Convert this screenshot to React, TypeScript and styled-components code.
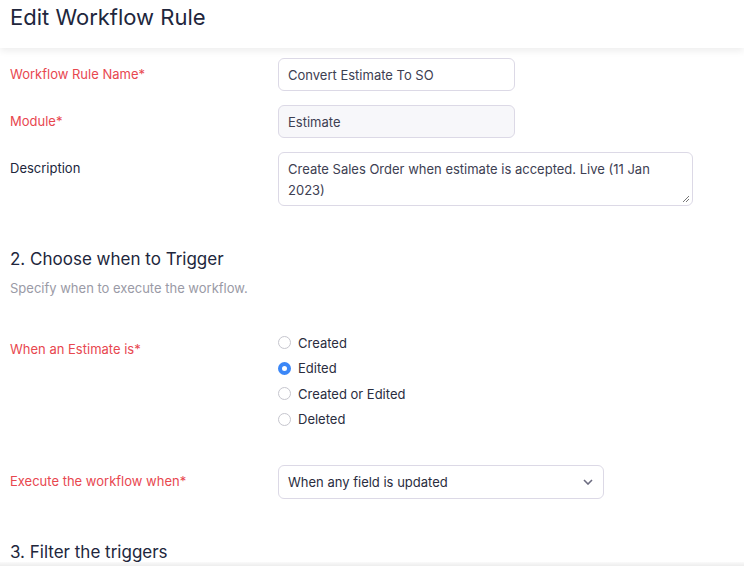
import styled, { createGlobalStyle } from "styled-components";

const GlobalStyle = createGlobalStyle`
  html, body {
    margin: 0;
    padding: 0;
    background: #fff;
    font-family: Inter, "Noto Sans", sans-serif;
    color: #21263c;
  }
  * {
    box-sizing: border-box;
  }
`;

const Page = styled.div`
  width: 744px;
  height: 566px;
  overflow: hidden;
  position: relative;
`;

const Header = styled.header`
  height: 48px;
  padding: 3px 10px 0;
  background: #fff;
  box-shadow: 0 3px 7px rgba(0, 0, 0, 0.07);
  position: relative;
  z-index: 1;
`;

const Title = styled.h1`
  margin: 0;
  font-size: 22px;
  line-height: 28px;
  font-weight: 400;
  color: #21263c;
`;

const Body = styled.main`
  padding: 10px 10px 0;
`;

const Row = styled.div<{ $top?: number }>`
  display: grid;
  grid-template-columns: 268px 1fr;
  margin-top: ${(p) => p.$top ?? 14}px;
`;

const Label = styled.label<{ $required?: boolean; $offset?: number }>`
  font-size: 13px;
  line-height: 33px;
  padding-top: ${(p) => p.$offset ?? 0}px;
  color: ${(p) => (p.$required ? "#e8474f" : "#21263c")};
`;

const TextInput = styled.div<{ $disabled?: boolean }>`
  width: 237px;
  height: 33px;
  display: flex;
  align-items: center;
  padding: 0 9px;
  font-size: 13px;
  color: #3d4052;
  border: 1px solid #dcd9e6;
  border-radius: 6px;
  background: ${(p) => (p.$disabled ? "#f7f7fa" : "#fff")};
`;

const TextArea = styled.div`
  position: relative;
  width: 415px;
  height: 54px;
  padding: 6px 9px;
  font-size: 13px;
  line-height: 21px;
  color: #3d4052;
  border: 1px solid #dcd9e6;
  border-radius: 6px;
`;

const Grip = styled.svg`
  position: absolute;
  right: 2px;
  bottom: 2px;
`;

const SectionTitle = styled.h2<{ $top?: number }>`
  margin: ${(p) => p.$top ?? 41}px 0 0;
  font-size: 17px;
  line-height: 24px;
  font-weight: 400;
  color: #21263c;
`;

const SectionHint = styled.p`
  margin: 8px 0 0;
  font-size: 13px;
  line-height: 18px;
  color: #9a9aa6;
`;

const RadioGroup = styled.div`
  display: flex;
  flex-direction: column;
`;

const RadioItem = styled.div`
  display: flex;
  align-items: center;
  gap: 7px;
  height: 25.5px;
  font-size: 13px;
  color: #2a2d3e;
`;

const RadioDot = styled.span<{ $checked?: boolean }>`
  width: 13px;
  height: 13px;
  border-radius: 50%;
  flex: none;
  border: ${(p) => (p.$checked ? "4px solid #3b87f7" : "1px solid #c6c6ce")};
  background: #fff;
`;

const Select = styled.div`
  width: 326px;
  height: 34px;
  display: flex;
  align-items: center;
  justify-content: space-between;
  padding: 0 10px 0 9px;
  font-size: 13px;
  color: #2a2d3e;
  border: 1px solid #dcd9e6;
  border-radius: 6px;
  background: #fff;
`;

const FooterShade = styled.div`
  position: absolute;
  left: 0;
  right: 0;
  bottom: 0;
  height: 4px;
  background: linear-gradient(to bottom, rgba(0, 0, 0, 0.02), rgba(0, 0, 0, 0.07));
`;

const triggers = ["Created", "Edited", "Created or Edited", "Deleted"];

export default function App() {
  return (
    <Page>
      <GlobalStyle />
      <Header>
        <Title>Edit Workflow Rule</Title>
      </Header>
      <Body>
        <Row $top={0}>
          <Label $required>Workflow Rule Name*</Label>
          <TextInput>Convert Estimate To SO</TextInput>
        </Row>
        <Row>
          <Label $required>Module*</Label>
          <TextInput $disabled>Estimate</TextInput>
        </Row>
        <Row>
          <Label>Description</Label>
          <TextArea>
            Create Sales Order when estimate is accepted. Live (11 Jan 2023)
            <Grip width="8" height="8" viewBox="0 0 8 8">
              <path d="M7 1 L1 7 M7 4 L4 7" stroke="#777" strokeWidth="1" />
            </Grip>
          </TextArea>
        </Row>

        <SectionTitle>2. Choose when to Trigger</SectionTitle>
        <SectionHint>Specify when to execute the workflow.</SectionHint>

        <Row $top={33}>
          <Label $required $offset={3}>When an Estimate is*</Label>
          <RadioGroup>
            {triggers.map((t) => (
              <RadioItem key={t}>
                <RadioDot $checked={t === "Edited"} />
                {t}
              </RadioItem>
            ))}
          </RadioGroup>
        </Row>

        <Row $top={33}>
          <Label $required>Execute the workflow when*</Label>
          <Select>
            When any field is updated
            <svg width="10" height="6" viewBox="0 0 10 6">
              <path d="M1 1 L5 5 L9 1" fill="none" stroke="#6c6c80" strokeWidth="1.6" />
            </svg>
          </Select>
        </Row>

        <SectionTitle>3. Filter the triggers</SectionTitle>
      </Body>
      <FooterShade />
    </Page>
  );
}
